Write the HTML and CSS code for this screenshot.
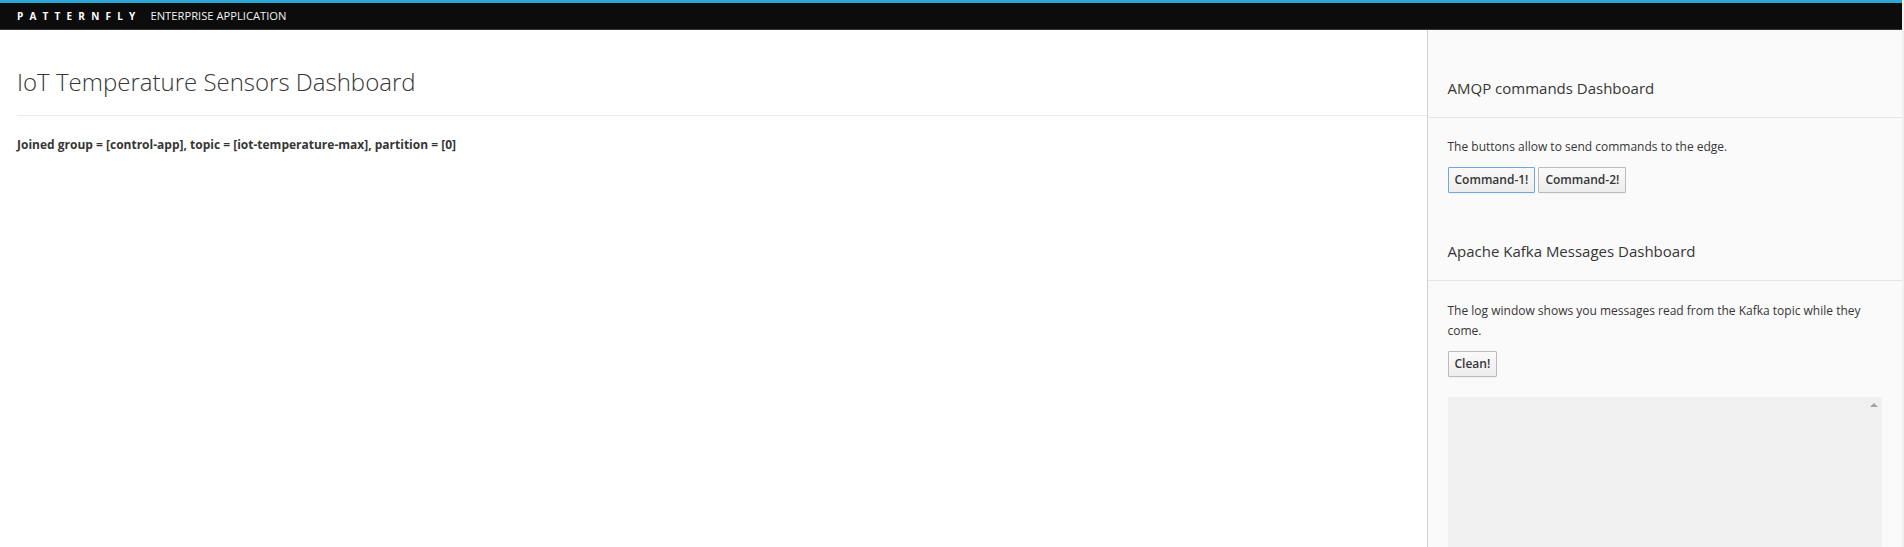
FILE: index.html
```html
<!DOCTYPE html>
<html lang="en">
<head>
<meta charset="utf-8">
<title>IoT Temperature Sensors Dashboard</title>
<link rel="stylesheet" href="styles.css">
</head>
<body>
<div class="page">
  <header class="navbar">
    <span class="brand-name">PATTERNFLY</span>
    <span class="brand-app">ENTERPRISE APPLICATION</span>
  </header>
  <div class="layout">
    <main class="main">
      <h1 class="page-title">IoT Temperature Sensors Dashboard</h1>
      <p class="status">Joined group = [control-app], topic = [iot-temperature-max], partition = [0]</p>
    </main>
    <aside class="sidebar">
      <section class="panel">
        <div class="panel-head"><h2 class="panel-title">AMQP commands Dashboard</h2></div>
        <div class="panel-body">
          <p class="panel-text">The buttons allow to send commands to the edge.</p>
          <div class="btn-row">
            <button class="btn btn-focus" type="button">Command-1!</button>
            <button class="btn" type="button">Command-2!</button>
          </div>
        </div>
      </section>
      <section class="panel panel-log">
        <div class="panel-head"><h2 class="panel-title">Apache Kafka Messages Dashboard</h2></div>
        <div class="panel-body">
          <p class="panel-text">The log window shows you messages read from the Kafka topic while they come.</p>
          <div class="btn-row">
            <button class="btn" type="button">Clean!</button>
          </div>
          <div class="log">
            <span class="log-arrow"></span>
          </div>
        </div>
      </section>
    </aside>
  </div>
</div>
</body>
</html>
```
FILE: styles.css
```css
html, body {
  margin: 0;
  padding: 0;
  height: 100%;
  overflow: hidden;
  background: #f1f1f1;
}
body {
  font-family: "Open Sans", "Liberation Sans", sans-serif;
  font-size: 12px;
  color: #363636;
}
.page {
  width: calc(100% - 2px);
  height: 100%;
  display: flex;
  flex-direction: column;
  background: #fff;
}
.navbar {
  flex: none;
  height: 26px;
  border-top: 3px solid #2aa6d9;
  border-bottom: 1px solid #363636;
  background: #0c0c0c;
  color: #fff;
  display: flex;
  align-items: center;
  padding-left: 17px;
  gap: 9px;
}
.brand-name {
  font-weight: 700;
  font-size: 10px;
  letter-spacing: 6.2px;
  line-height: 1;
}
.brand-app {
  font-size: 11.2px;
  font-weight: 400;
  line-height: 1;
  color: #f0f0f0;
}
.layout {
  flex: 1;
  display: grid;
  grid-template-columns: 3fr 1fr;
  min-height: 0;
}
.main {
  padding: 39px 0 0 17px;
}
.page-title {
  margin: 0;
  font-size: 24px;
  font-weight: 300;
  line-height: 26px;
  padding-bottom: 20px;
  border-bottom: 1px solid #ededed;
  color: #363636;
}
.status {
  margin: 19px 0 0;
  font-weight: 700;
  line-height: 20px;
}
.sidebar {
  background: #fafafa;
  border-left: 1px solid #d1d1d1;
  overflow: hidden;
}
.panel-head {
  padding: 49px 20px 20px;
  border-bottom: 1px solid #e5e5e5;
}
.panel-title {
  margin: 0;
  font-size: 15px;
  font-weight: 400;
  line-height: 18px;
  color: #363636;
}
.panel-body {
  padding: 0 20px;
}
.panel-text {
  margin: 19px 0 10px;
  line-height: 20px;
}
.panel-log .panel-text {
  margin-top: 20px;
}
.btn-row {
  display: flex;
  gap: 3px;
}
.btn {
  font-family: inherit;
  font-size: 12px;
  font-weight: 600;
  line-height: 20px;
  color: #363636;
  padding: 2px 6px;
  border: 1px solid #bbb;
  border-radius: 1px;
  background: linear-gradient(#fafafa, #ededed);
  box-shadow: 0 1px 1px rgba(3, 3, 3, 0.04);
}
.btn-focus {
  border-color: #6fa9dc;
}
.log {
  position: relative;
  margin-top: 20px;
  height: 220px;
  background: #f0f0f0;
}
.log-arrow {
  position: absolute;
  top: 6px;
  right: 4px;
  width: 0;
  height: 0;
  border-left: 4px solid transparent;
  border-right: 4px solid transparent;
  border-bottom: 4px solid #a3a3a3;
}
```
